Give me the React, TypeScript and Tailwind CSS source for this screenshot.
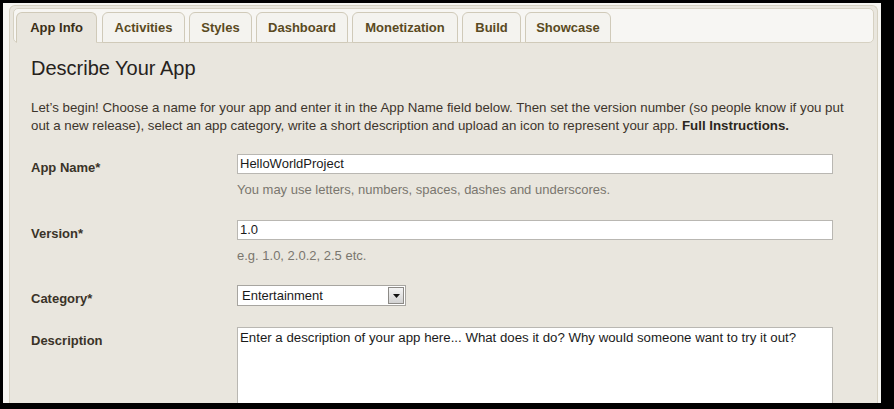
import React from 'react';

const tabs = [
  { label: 'App Info', w: 'w-[81px]' },
  { label: 'Activities', w: 'w-[83px]' },
  { label: 'Styles', w: 'w-[63px]' },
  { label: 'Dashboard', w: 'w-[92px]' },
  { label: 'Monetization', w: 'w-[106px]' },
  { label: 'Build', w: 'w-[59px]' },
  { label: 'Showcase', w: 'w-[86px]' },
];

const FieldRow: React.FC<{ label: string; hint?: string; children: React.ReactNode; className?: string }> = ({
  label, hint, children, className,
}) => (
  <div className={'flex ' + (className ?? '')}>
    <div className="w-[206px] shrink-0 pt-[4px] text-[13px] font-bold text-[#3a3328]">{label}</div>
    <div className="flex flex-col">
      {children}
      {hint && <div className="mt-[6px] text-[13px] text-[#7a766e]">{hint}</div>}
    </div>
  </div>
);

export default function App() {
  return (
    <div
      className="w-[894px] h-[409px] bg-black pl-[3px] pt-[3px] pr-[13px] pb-[6px] overflow-hidden"
      style={{ fontFamily: '"Liberation Sans", Arial, sans-serif' }}
    >
      <div className="h-full bg-[#f6f5f1] pl-[6px] pt-[2px] pr-[3px] overflow-hidden">
        <div className="h-full rounded-t-[6px] border border-b-0 border-[#d6d1c2] bg-[#e9e6de] px-[3px] pt-[2px] overflow-hidden">
          {/* tab strip */}
          <div className="flex h-[35px] items-end gap-[3px] rounded-[5px] border border-[#d6d1c2] bg-[#f7f6f3] pl-[2px]">
            {tabs.map((t, i) => (
              <div
                key={t.label}
                className={
                  t.w +
                  ' h-[31px] -mb-px flex items-center justify-center rounded-t-[6px] border border-[#d0cab9] text-[13px] font-bold ' +
                  (i === 0
                    ? 'mr-px border-b-[#e9e6de] bg-[#e9e6de] text-[#3b2f16]'
                    : 'ml-px bg-[#f4f3ef] text-[#5a4a22]')
                }
              >
                {t.label}
              </div>
            ))}
          </div>

          <div className="pl-[18px] pr-[26px]">
            <h1 className="mt-[13px] text-[20px] leading-[24px] text-[#26221c]">Describe Your App</h1>

            <p className="mt-[19px] text-[13.3px] leading-[18px] text-[#3d352c]">
              Let’s begin! Choose a name for your app and enter it in the App Name field below. Then set the version number
              (so people know if you put out a new release), select an app category, write a short description and upload an
              icon to represent your app. <b className="text-[#2c2620]">Full Instructions.</b>
            </p>

            <FieldRow label="App Name*" hint="You may use letters, numbers, spaces, dashes and underscores." className="mt-[19px]">
              <div className="h-[20px] w-[596px] border border-[#b9b7b2] bg-white px-[2px] text-[13px] leading-[18px] text-[#1a1a1a]">
                HelloWorldProject
              </div>
            </FieldRow>

            <FieldRow label="Version*" hint="e.g. 1.0, 2.0.2, 2.5 etc." className="mt-[20px]">
              <div className="h-[20px] w-[596px] border border-[#b9b7b2] bg-white px-[2px] text-[13px] leading-[18px] text-[#1a1a1a]">
                1.0
              </div>
            </FieldRow>

            <FieldRow label="Category*" className="mt-[20px]">
              <div className="flex h-[21px] w-[169px] items-center border border-[#a7a5a0] bg-white pl-[4px] text-[13px] text-[#1a1a1a]">
                <span className="flex-1">Entertainment</span>
                <div className="flex h-[17px] w-[16px] items-center justify-center border border-[#8c8a86] bg-gradient-to-b from-[#f4f4f4] to-[#d2d2d2] mr-px">
                  <svg width="7" height="4" viewBox="0 0 7 4">
                    <path d="M0 0h7L3.5 4z" fill="#111" />
                  </svg>
                </div>
              </div>
            </FieldRow>

            <FieldRow label="Description" className="mt-[18px]">
              <div className="h-[90px] w-[596px] border border-[#b9b7b2] bg-white px-[2px] pt-[1px] text-[13.25px] leading-[18px] text-[#1a1a1a]">
                Enter a description of your app here... What does it do? Why would someone want to try it out?
              </div>
            </FieldRow>
          </div>
        </div>
      </div>
    </div>
  );
}
